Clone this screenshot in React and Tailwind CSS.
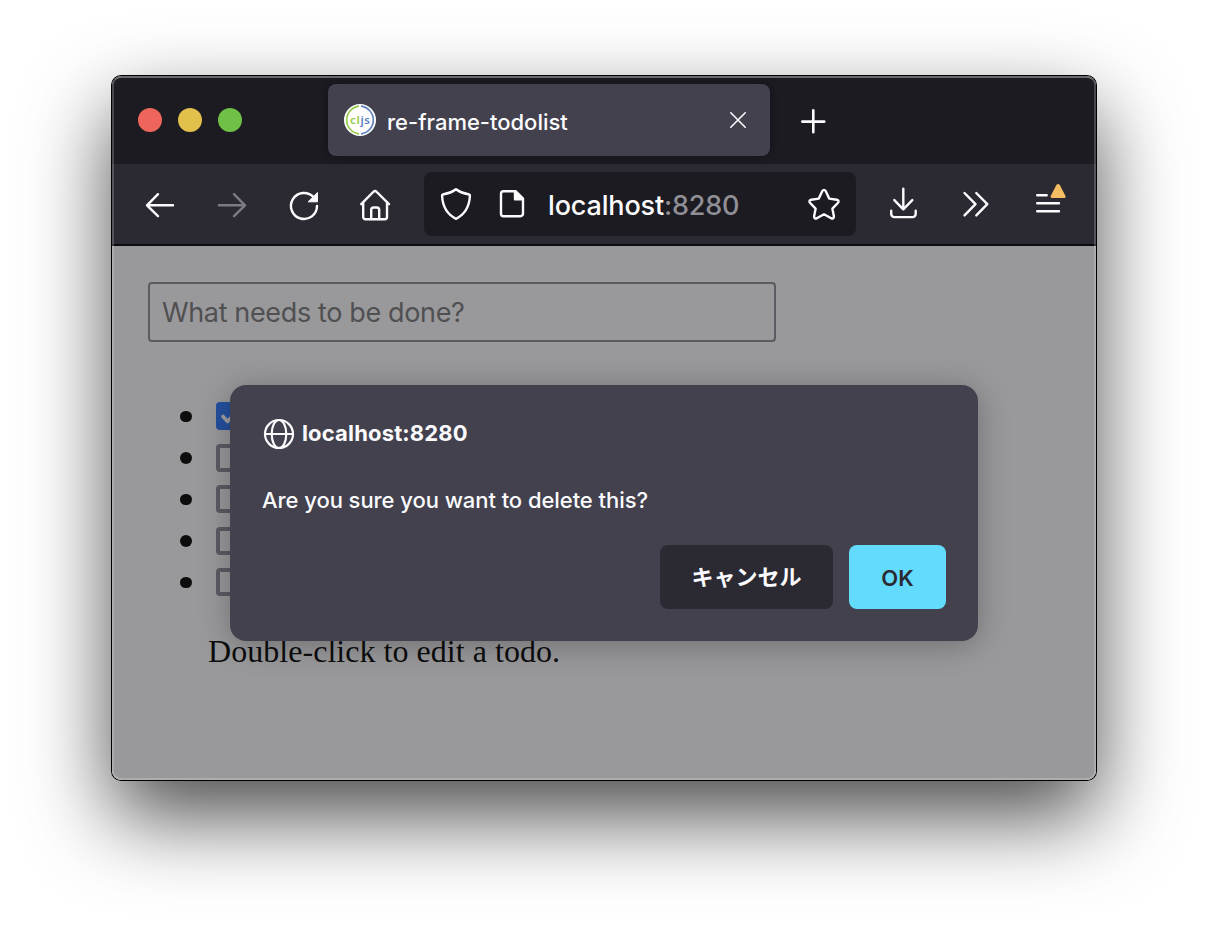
import React from "react";

function Icon({ size = 40, stroke = "#fbfbfe", width = 2.4, className = "", children }) {
  return (
    <svg
      width={size}
      height={size}
      viewBox={`0 0 ${size} ${size}`}
      fill="none"
      stroke={stroke}
      strokeWidth={width}
      strokeLinecap="round"
      strokeLinejoin="round"
      className={`block shrink-0 ${className}`}
    >
      {children}
    </svg>
  );
}

function NavButton({ children }) {
  return <button className="flex h-20 w-[72px] shrink-0 items-center justify-center">{children}</button>;
}

function Favicon() {
  return (
    <svg width="32" height="32" viewBox="0 0 32 32" className="block shrink-0">
      <circle cx="16" cy="16" r="16" fill="#ffffff" />
      <path d="M15 2.1A14 14 0 0 0 15 29.9" fill="none" stroke="#96ca4b" strokeWidth="1.7" />
      <path d="M17 2.1A14 14 0 0 1 17 29.9" fill="none" stroke="#5f7fbf" strokeWidth="1.7" />
      <text x="6" y="19.600" fontSize="11.500" fontFamily="'Noto Sans', sans-serif" fontWeight="600" textLength="20">
        <tspan fill="#96ca4b">cl</tspan>
        <tspan fill="#5f7fbf">js</tspan>
      </text>
    </svg>
  );
}

function TabBar() {
  return (
    <div className="flex h-[88px] items-start bg-[#1c1b22] pl-[26px]">
      <div className="flex h-[88px] w-[190px] items-center gap-4">
        <span className="size-6 rounded-full bg-[#ee665b]" />
        <span className="size-6 rounded-full bg-[#e1c04c]" />
        <span className="size-6 rounded-full bg-[#70bf47]" />
      </div>
      <div className="mt-2 flex h-[72px] w-[442px] items-center rounded-lg bg-[#42414d] pl-4 pr-3 shadow-[0_0_8px_rgba(0,0,0,0.4)]">
        <Favicon />
        <span className="ml-[11px] mt-1 flex-1 whitespace-nowrap text-[22px] font-[450] leading-7 tracking-[-0.01px] text-[#fbfbfe]">
          re-frame-todolist
        </span>
        <Icon width={1.6}>
          <path d="M12.800 12.800l14.400 14.400M27.200 12.800L12.800 27.200" />
        </Icon>
      </div>
      <div className="ml-[23px] mt-[25px]">
        <Icon width={2.6}>
          <path d="M20.300 9.300v22M9.300 20.600h22" />
        </Icon>
      </div>
    </div>
  );
}

function UrlBar() {
  return (
    <div className="mx-3 flex h-16 flex-1 items-center rounded-lg bg-[#1c1b22] px-1">
      <div className="flex w-14 justify-center">
        <Icon>
          <path d="M20 5.2C16 8.2 11.500 9.700 7.600 10.300C6.500 10.500 6 11.200 6.100 12.300C6.700 22.500 10.700 30.200 20 34.800C29.300 30.200 33.300 22.500 33.900 12.300C34 11.200 33.500 10.500 32.400 10.300C28.500 9.700 24 8.200 20 5.200Z" />
        </Icon>
      </div>
      <div className="flex w-14 justify-center">
        <Icon>
          <path d="M11.500 7.200h12l7.500 7.500v15a2.500 2.500 0 0 1-2.500 2.500H11.500a2.500 2.500 0 0 1-2.500-2.500v-20a2.500 2.500 0 0 1 2.500-2.500z" />
          <path d="M23 7.500v7.700h7.800z" fill="#fbfbfe" />
        </Icon>
      </div>
      <span className="ml-2 mt-1 flex-1 whitespace-nowrap text-[27px] font-[450] leading-8 tracking-[-0.16px] text-[#fbfbfe]">
        localhost<span className="text-[#8f8f95]">:8280</span>
      </span>
      <div className="flex w-14 justify-center">
        <Icon>
          <path d="M18.200 7.200Q20 4.600 21.800 7.200L25.200 14.600L32.800 15.700Q35.800 16.600 33.800 19L28.400 24.700L29.900 32.300Q29.900 35.200 27.200 34.300L20 30.200L12.800 34.300Q10.100 35.200 10.100 32.300L11.600 24.700L6.200 19Q4.200 16.600 7.200 15.700L14.800 14.600Z" />
        </Icon>
      </div>
    </div>
  );
}

function NavBar() {
  return (
    <div className="flex h-[82px] items-center border-b-2 border-[#0c0c0d] bg-[#2b2a33] px-3">
      <NavButton>
        <Icon>
          <path d="M33 21.300H7M18 10.200L7 21.300l11 10.800" />
        </Icon>
      </NavButton>
      <NavButton>
        <Icon stroke="#7c7b82">
          <path d="M7 21.300h26M22 10.200l11 11.100l-11 10.800" />
        </Icon>
      </NavButton>
      <NavButton>
        <Icon>
          <path d="M33 22a13 13 0 1 1-3.500-8.900" />
          <path d="M33.500 8.800v9h-9z" fill="#fbfbfe" strokeWidth="1" />
        </Icon>
      </NavButton>
      <NavButton>
        <Icon>
          <path d="M5.200 20.200L17.200 8q1.800-1.800 3.600 0l12.200 12.200" />
          <path d="M7.200 19v14a2.200 2.200 0 0 0 2.200 2.200h19.400a2.200 2.200 0 0 0 2.200-2.200v-14" />
          <path d="M15.200 35v-9a2.500 2.500 0 0 1 2.500-2.500h3a2.500 2.500 0 0 1 2.500 2.500v9" />
        </Icon>
      </NavButton>
      <UrlBar />
      <NavButton>
        <Icon>
          <path d="M19.300 4.600v20.500M10.300 16.100l9 9.200l9-9.200" />
          <path d="M7.200 26.800v3.300a3 3 0 0 0 3 3h18.500a3 3 0 0 0 3-3v-3.300" />
        </Icon>
      </NavButton>
      <NavButton>
        <Icon>
          <path d="M8.500 9l11 11.200l-11 11.200M20.300 9l11 11.200l-11 11.200" />
        </Icon>
      </NavButton>
      <NavButton>
        <Icon className="overflow-visible">
          <path d="M9.200 11.300h9.500M9.200 19.300h21.800M9.200 27.300h21.800" />
          <path
            d="M28.300 1.200L22.700 12q-.6 2 1.200 2h12.400q1.800 0 1.200-2L31.900 1.200q-1.800-2.300-3.600 0z"
            fill="#f5bd62"
            stroke="none"
          />
        </Icon>
      </NavButton>
    </div>
  );
}

function TodoRow({ done }) {
  return (
    <li className="flex h-[41.5px] items-start">
      <span className="mt-[8.5px] size-[11.5px] rounded-full bg-[#0d0d0e]" />
      {done ? (
        <span className="ml-6 flex size-7 items-center justify-center rounded bg-[#24509e]">
          <Icon size={28} stroke="#a1a1a4" width={3.6}>
            <path d="M7 14.500l4.600 4.900L21 9" />
          </Icon>
        </span>
      ) : (
        <span className="ml-6 size-7 rounded border-4 border-[#5c5b64]" />
      )}
    </li>
  );
}

function Page() {
  return (
    <div className="flex-1 bg-[#99999b] pl-9 pt-9">
      <div className="flex h-[60px] w-[628px] items-center rounded border-2 border-[#5c5b64] px-3 pt-0.5 text-[27px] tracking-[-0.36px] text-[#505052]">
        What needs to be done?
      </div>
      <ul className="ml-[32.4px] mt-[60px]">
        {[true, false, false, false, false].map((done, i) => (
          <TodoRow key={i} done={done} />
        ))}
      </ul>
      <p className="ml-[60px] mt-[23px] font-['Liberation_Serif',serif] text-[32px] leading-9 tracking-[0.04px] text-[#0d0d0e]">
        Double-click to edit a todo.
      </p>
    </div>
  );
}

function Dialog() {
  return (
    <div className="absolute left-[118px] top-[309px] flex h-64 w-[748px] flex-col rounded-2xl bg-[#42414d] p-8 text-[#fbfbfe] shadow-[0_4px_32px_rgba(0,0,0,0.28)]">
      <div className="flex h-[34px] items-center">
        <Icon size={34} width={2.2}>
          <circle cx="17" cy="17" r="14" />
          <ellipse cx="17" cy="17" rx="7.300" ry="14" />
          <path d="M3 17h28" />
        </Icon>
        <span className="-mt-0.5 ml-1.5 text-[22px] font-bold leading-7 tracking-[0.16px]">localhost:8280</span>
      </div>
      <p className="mt-[33px] text-[22px] font-[450] leading-8 tracking-[-0.06px]">
        Are you sure you want to delete this?
      </p>
      <div className="mt-auto flex justify-end gap-4">
        <button className="h-16 w-[173px] rounded-lg bg-[#2b2a33] text-[22px] font-bold">キャンセル</button>
        <button className="h-16 w-[97px] rounded-lg bg-[#62dbfd] pt-0.5 text-[22px] font-semibold text-[#2b2a33]">
          OK
        </button>
      </div>
    </div>
  );
}

export default function App() {
  return (
    <div className="h-[928px] w-[1208px] overflow-hidden bg-white px-[112px] pt-[76px] font-[Inter,'Noto_Sans_CJK_JP',sans-serif]">
      <div className="relative h-[704px] w-[984px] rounded-[9px] shadow-[0_0_0_1px_#000,0_36px_84px_rgba(0,0,0,0.71)]">
        <div className="flex h-full flex-col overflow-hidden rounded-[9px]">
          <TabBar />
          <NavBar />
          <Page />
        </div>
        <Dialog />
        <div className="pointer-events-none absolute inset-0 rounded-[9px] border-2 border-white/20 border-t-white/35" />
      </div>
    </div>
  );
}
